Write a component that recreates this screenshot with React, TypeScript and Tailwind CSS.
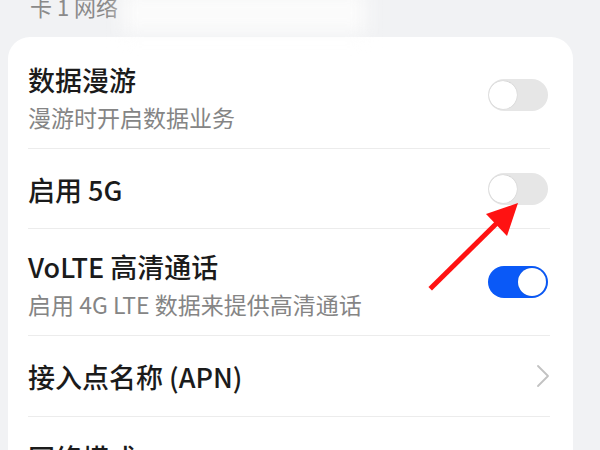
import React from "react";
import { ChevronRight } from "lucide-react";

const font = { fontFamily: '"Noto Sans CJK SC", "Noto Sans", sans-serif' };

// Simple switch, on = blue track with knob to the right
const Toggle = ({ on }: { on?: boolean }) => (
  <div
    className={`relative w-[60px] h-[32px] rounded-full shrink-0 ${
      on ? "bg-[#0a59f7]" : "bg-[#e6e6e6]"
    }`}
  >
    <div
      className={`absolute top-[2px] w-[28px] h-[28px] rounded-full bg-white shadow-[0_0_1px_rgba(0,0,0,0.25)] ${
        on ? "right-[2px]" : "left-[1px]"
      }`}
    />
  </div>
);

type RowProps = {
  title: string;
  subtitle?: string;
  right?: React.ReactNode;
  height: string;
  divider?: boolean;
};

const Row = ({ title, subtitle, right, height, divider = true }: RowProps) => (
  <div className={`flex flex-col ${height}`}>
    <div className="flex flex-1 items-center pl-[20px] pr-[25px]">
      <div className={`flex flex-col flex-1 ${subtitle ? "pt-[7px]" : "pt-[2px]"}`}>
        <span className="text-[27px] leading-[34px] font-medium text-[#1b1b1b]">{title}</span>
        {subtitle && (
          <span className="mt-[3px] text-[23px] leading-[34px] text-[#858585]">{subtitle}</span>
        )}
      </div>
      {right}
    </div>
    {divider && <div className="h-px bg-[#ececec] ml-[20px] mr-[23px]" />}
  </div>
);

export default function App() {
  return (
    <div className="relative w-[600px] h-[450px] overflow-hidden bg-[#f1f2f4]" style={font}>
      {/* section header */}
      <div className="flex flex-col h-[37px] pl-[30px]">
        <div className="-mt-[6px] text-[22px] leading-[24px] text-[#8a8a8a]">卡 1 网络</div>
      </div>

      {/* blurred-out part of the header */}
      <div className="absolute left-[122px] top-[-8px] w-[245px] h-[42px] bg-[#fbfbfb] blur-[9px]" />

      {/* card */}
      <div className="ml-[8px] w-[565px] bg-white rounded-[22px] pt-[4px]">
        <Row title="数据漫游" subtitle="漫游时开启数据业务" height="h-[108px]" right={<Toggle />} />
        <Row title="启用 5G" height="h-[80px]" right={<Toggle />} />
        <Row
          title="VoLTE 高清通话"
          subtitle="启用 4G LTE 数据来提供高清通话"
          height="h-[107px]"
          right={<Toggle on />}
        />
        <Row
          title="接入点名称 (APN)"
          height="h-[81px]"
          right={<ChevronRight className="w-[40px] h-[40px] text-[#c2c2c2] -mr-[15px]" strokeWidth={1.1} />}
        />
        <Row title="网络模式" height="h-[80px]" divider={false} />
      </div>

      {/* red annotation arrow */}
      <svg className="absolute left-0 top-0 pointer-events-none" width="600" height="450">
        <line x1="432" y1="287" x2="500" y2="220" stroke="#ff1212" strokeWidth="5" strokeLinecap="square" />
        <polygon points="518,203 486,214 507,236" fill="#ff1212" />
      </svg>
    </div>
  );
}
